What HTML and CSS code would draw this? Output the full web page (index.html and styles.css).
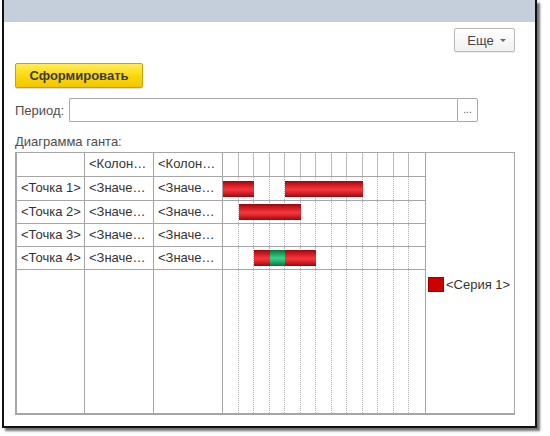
FILE: index.html
```html
<!DOCTYPE html>
<html>
<head>
<meta charset="utf-8">
<link rel="stylesheet" href="styles.css">
</head>
<body>
<div class="window">
  <div class="titlebar"></div>
  <div class="content">
    <div class="toolbar">
      <button class="more-btn">Еще <span class="caret"></span></button>
    </div>
    <button class="primary-btn">Сформировать</button>
    <div class="period-row">
      <span class="label">Период:</span>
      <div class="input"></div>
      <div class="choose-btn">...</div>
    </div>
    <div class="chart-label">Диаграмма ганта:</div>
    <div class="chart">
      <div class="table">
        <div class="cell"></div>
        <div class="cell">&lt;Колон…</div>
        <div class="cell">&lt;Колон…</div>
        <div class="gantt head">
          <i></i><i></i><i></i><i></i><i></i><i></i><i></i><i></i><i></i><i></i><i></i><i></i><i></i>
        </div>

        <div class="cell">&lt;Точка 1&gt;</div>
        <div class="cell">&lt;Значе…</div>
        <div class="cell">&lt;Значе…</div>
        <div class="gantt">
          <i></i><i></i><i></i><i></i><i></i><i></i><i></i><i></i><i></i><i></i><i></i><i></i><i></i>
          <div class="bar" style="grid-column: 1 / span 2"></div>
          <div class="bar" style="grid-column: 5 / span 5"></div>
        </div>

        <div class="cell">&lt;Точка 2&gt;</div>
        <div class="cell">&lt;Значе…</div>
        <div class="cell">&lt;Значе…</div>
        <div class="gantt">
          <i></i><i></i><i></i><i></i><i></i><i></i><i></i><i></i><i></i><i></i><i></i><i></i><i></i>
          <div class="bar" style="grid-column: 2 / span 4"></div>
        </div>

        <div class="cell">&lt;Точка 3&gt;</div>
        <div class="cell">&lt;Значе…</div>
        <div class="cell">&lt;Значе…</div>
        <div class="gantt">
          <i></i><i></i><i></i><i></i><i></i><i></i><i></i><i></i><i></i><i></i><i></i><i></i><i></i>
        </div>

        <div class="cell">&lt;Точка 4&gt;</div>
        <div class="cell">&lt;Значе…</div>
        <div class="cell">&lt;Значе…</div>
        <div class="gantt">
          <i></i><i></i><i></i><i></i><i></i><i></i><i></i><i></i><i></i><i></i><i></i><i></i><i></i>
          <div class="bar" style="grid-column: 3 / span 1"></div>
          <div class="bar green" style="grid-column: 4 / span 1"></div>
          <div class="bar" style="grid-column: 5 / span 2"></div>
        </div>

        <div class="cell last"></div>
        <div class="cell last"></div>
        <div class="cell last"></div>
        <div class="gantt last">
          <i></i><i></i><i></i><i></i><i></i><i></i><i></i><i></i><i></i><i></i><i></i><i></i><i></i>
        </div>
      </div>
      <div class="legend">
        <span class="swatch"></span><span class="legend-text">&lt;Серия 1&gt;</span>
      </div>
    </div>
  </div>
</div>
</body>
</html>
```

FILE: styles.css
```css
html, body {
  margin: 0;
  padding: 0;
  background: #fff;
}
body {
  width: 550px;
  height: 436px;
  font-family: "Liberation Sans", Arial, sans-serif;
  font-size: 13px;
  color: #333;
}
.window {
  margin-left: 2px;
  width: 535px;
  height: 428px;
  box-sizing: border-box;
  border-left: 2px solid #111;
  border-right: 2px solid #111;
  border-bottom: 2px solid #111;
  box-shadow: 3px 3px 2px rgba(0,0,0,0.55);
  display: flex;
  flex-direction: column;
  background: #fff;
}
.titlebar {
  height: 22px;
  flex: none;
  background: #c4cfdb;
}
.content {
  flex: 1;
  display: flex;
  flex-direction: column;
  padding: 0 20px 11px 11px;
  min-height: 0;
}
.toolbar {
  display: flex;
  justify-content: flex-end;
  margin-top: 6px;
}
.more-btn {
  width: 61px;
  height: 24px;
  box-sizing: border-box;
  border: 1px solid #b9b9b9;
  border-radius: 2px;
  background: linear-gradient(#ffffff, #f1f1f1);
  font: 13px "Liberation Sans", Arial, sans-serif;
  color: #444;
  padding: 0 0 0 4px;
  display: flex;
  align-items: center;
  justify-content: center;
  gap: 6px;
  box-shadow: 0 1px 1px rgba(0,0,0,0.08);
}
.caret {
  width: 0;
  height: 0;
  border-left: 3px solid transparent;
  border-right: 3px solid transparent;
  border-top: 3px solid #666;
}
.primary-btn {
  align-self: flex-start;
  margin-top: 11px;
  width: 128px;
  height: 25px;
  box-sizing: border-box;
  border: 1px solid #c9a400;
  border-radius: 2px;
  background: linear-gradient(#ffec5c, #fbd90f 50%, #f1c600);
  font: bold 13px "Liberation Sans", Arial, sans-serif;
  color: #3a3a3a;
  padding: 0;
  box-shadow: 0 1px 1px rgba(0,0,0,0.15);
}
.period-row {
  display: flex;
  align-items: center;
  margin-top: 10px;
  height: 24px;
}
.label {
  color: #4d4d4d;
  width: 54px;
  flex: none;
}
.input {
  width: 388px;
  height: 24px;
  box-sizing: border-box;
  border: 1px solid #a9a9a9;
  border-right: none;
  border-radius: 2px 0 0 2px;
  background: #fff;
}
.choose-btn {
  width: 21px;
  height: 24px;
  box-sizing: border-box;
  border: 1px solid #a9a9a9;
  border-radius: 0 2px 2px 0;
  display: flex;
  align-items: center;
  justify-content: center;
  font-size: 10px;
  color: #555;
  padding-bottom: 2px;
}
.chart-label {
  margin-top: 12px;
  line-height: 15px;
  color: #4d4d4d;
}
.chart {
  margin-top: 3px;
  flex: 1;
  display: flex;
  border: 1px solid #a6a6a6;
  border-left-width: 2px;
  border-bottom-width: 2px;
  min-height: 0;
}
.table {
  width: 409px;
  flex: none;
  display: grid;
  grid-template-columns: 68px 69px 69px 1fr;
  grid-template-rows: 24px 24px 23px 23px 23px 1fr;
}
.cell {
  box-sizing: border-box;
  border-right: 1px solid #a6a6a6;
  border-bottom: 1px solid #a6a6a6;
  padding: 0 2px 0 4px;
  line-height: 22px;
  white-space: nowrap;
  overflow: hidden;
  color: #333;
}
.cell.last, .gantt.last {
  border-bottom: none;
}
.gantt {
  box-sizing: border-box;
  border-right: 1px solid #a6a6a6;
  border-bottom: 1px solid #a6a6a6;
  display: grid;
  grid-template-columns: repeat(13, minmax(0, 1fr));
  grid-template-rows: 100%;
}
.gantt i {
  grid-row: 1;
  border-right: 1px dotted #b5b5b5;
}
.gantt i:nth-of-type(1) { grid-column: 1; }
.gantt i:nth-of-type(2) { grid-column: 2; }
.gantt i:nth-of-type(3) { grid-column: 3; }
.gantt i:nth-of-type(4) { grid-column: 4; }
.gantt i:nth-of-type(5) { grid-column: 5; }
.gantt i:nth-of-type(6) { grid-column: 6; }
.gantt i:nth-of-type(7) { grid-column: 7; }
.gantt i:nth-of-type(8) { grid-column: 8; }
.gantt i:nth-of-type(9) { grid-column: 9; }
.gantt i:nth-of-type(10) { grid-column: 10; }
.gantt i:nth-of-type(11) { grid-column: 11; }
.gantt i:nth-of-type(12) { grid-column: 12; }
.gantt i:nth-of-type(13) { grid-column: 13; border-right: none; }
.gantt.head i {
  border-right: 1px solid #b9b9b9;
}
.gantt.head i:nth-of-type(13) {
  border-right: none;
}
.bar {
  grid-row: 1;
  align-self: center;
  height: 16px;
  z-index: 1;
  background: linear-gradient(#8e0c10, #c8161c 20%, #ee2f35 45%, #f03a3f 55%, #d2191f 80%, #8e0c10);
}
.bar.green {
  background: linear-gradient(#0f6e3c, #1ea35e 25%, #3dd08f 50%, #22aa66 75%, #0f6e3c);
}
.legend {
  flex: 1;
  display: flex;
  align-items: center;
  padding-left: 2px;
  padding-top: 2px;
}
.swatch {
  width: 16px;
  height: 15px;
  box-sizing: border-box;
  background: #cc0000;
  border: 1px solid #a00000;
  margin-right: 2px;
}
.legend-text {
  color: #333;
}
```
